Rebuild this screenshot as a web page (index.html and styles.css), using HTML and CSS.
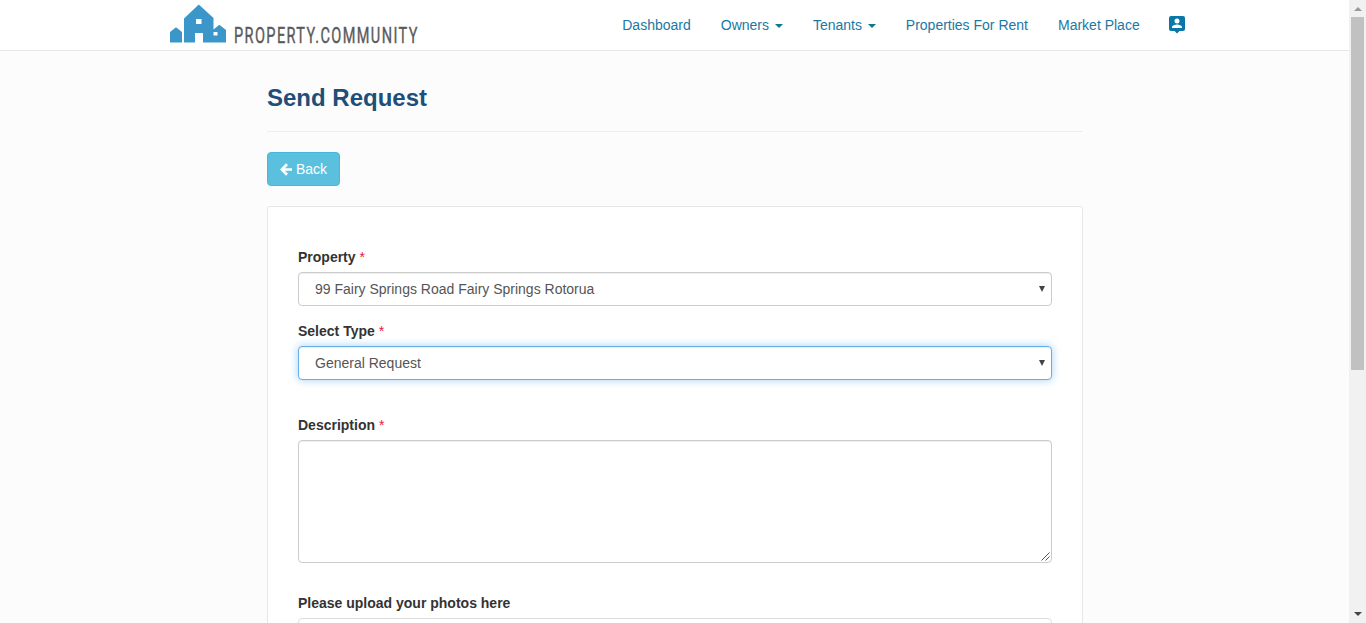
FILE: index.html
```html
<!DOCTYPE html>
<html lang="en">
<head>
<meta charset="utf-8">
<title>Send Request</title>
<link rel="stylesheet" href="styles.css">
</head>
<body>
<div class="page">
  <header class="navbar">
    <a class="brand">
      <svg width="270" height="50" viewBox="0 0 270 50">
        <path class="brand-mark" fill-rule="evenodd" d="M0 42.500V32l6-4.700 6 4.700v10.500zM14 42.500V18.500L28.800 4.500 43.500 18v11.500l5.800-4.800L56 30v12.500H33V33h-8v9.500zM26 19v5h5.500v-5zM43.500 32v3.500h4V32z"/>
        <text class="brand-text" transform="translate(64 42.700) scale(.66 1)" textLength="278" lengthAdjust="spacing">PROPERTY.COMMUNITY</text>
      </svg>
    </a>
    <nav class="menu">
      <a>Dashboard</a>
      <a>Owners <i class="caret"></i></a>
      <a>Tenants <i class="caret"></i></a>
      <a>Properties For Rent</a>
      <a>Market Place</a>
      <a class="account"><svg width="16" height="18" viewBox="0 0 16 18"><path fill="#0b77a8" fill-rule="evenodd" d="M2 0h12q2 0 2 2v11q0 2-2 2h-3.500L8 17.500 5.500 15H2q-2 0-2-2V2q0-2 2-2zM8 2.500a2.500 2.500 0 1 0 0 5 2.500 2.500 0 1 0 0-5zM3 12h10v-.8c0-1.700-3.300-2.600-5-2.600s-5 .9-5 2.600z"/></svg></a>
    </nav>
  </header>
  <main class="content">
    <h1>Send Request</h1>
    <a class="back"><svg width="12" height="13" viewBox="0 0 12 13"><path d="M7 1.200 1.900 6.500 7 11.800M2.500 6.500H12" fill="none" stroke="#fff" stroke-width="2.700"/></svg><span>Back</span></a>
    <form class="panel">
      <label>Property <b>*</b></label>
      <div class="control select"><span>99 Fairy Springs Road Fairy Springs Rotorua</span><i class="arrow"></i></div>
      <label>Select Type <b>*</b></label>
      <div class="control select focused"><span>General Request</span><i class="arrow"></i></div>
      <label class="spaced">Description <b>*</b></label>
      <div class="control area"><svg width="9" height="9" viewBox="0 0 9 9"><path d="M.5 8.500l8-8M4.500 8.500l4-4" stroke="#555"/></svg></div>
      <label class="upload-label">Please upload your photos here</label>
      <div class="control upload"></div>
    </form>
  </main>
</div>
<aside class="scrollbar"><i class="up"></i><div class="thumb"></div><i class="down"></i></aside>
</body>
</html>
```
FILE: styles.css
```css
* { box-sizing: border-box; }
body {
  margin: 0;
  height: 623px;
  display: flex;
  overflow: hidden;
  font: 14px/20px "Liberation Sans", Arial, sans-serif;
  color: #333;
  background: #fcfcfc;
}
.page { width: 1349px; height: 623px; overflow: hidden; }
.navbar {
  height: 51px;
  display: flex;
  justify-content: space-between;
  padding: 0 164px 0 170px;
  background: #fff;
  border-bottom: 1px solid #e7e7e7;
}
.brand svg { display: block; }
.brand-mark { fill: #3b97c9; }
.brand-text { font: 22px Roboto, sans-serif; fill: #5a5a5c; stroke: #5a5a5c; stroke-width: .4px; }
.menu { display: flex; gap: 30px; padding-top: 15px; color: #1a78a5; white-space: nowrap; }
.caret {
  display: inline-block;
  margin-left: 2px;
  vertical-align: middle;
  border-top: 4px solid #0b7794;
  border-left: 4px solid transparent;
  border-right: 4px solid transparent;
}
.account { margin-left: -.7px; }
.account svg { display: block; margin-top: 1px; }
.content { width: 816px; margin-left: 267px; padding-top: 30px; }
h1 {
  margin: 0 0 20px;
  height: 51px;
  border-bottom: 1px solid #eee;
  font-size: 24px;
  line-height: 34px;
  color: #1f4e79;
}
.back {
  display: flex;
  align-items: center;
  gap: 4px;
  width: 73px;
  height: 34px;
  padding-left: 12px;
  border: 1px solid #46b8da;
  border-radius: 4px;
  background: #5bc0de;
  color: #fff;
}
.panel {
  height: 600px;
  margin-top: 20px;
  padding: 40px 30px;
  background: #fff;
  border: 1px solid #e7e7e7;
  border-radius: 3px;
}
label { display: block; height: 20px; margin-bottom: 5px; font-weight: bold; }
label b { font-weight: normal; color: #e5193c; }
.control {
  height: 34px;
  border: 1px solid #ccc;
  border-radius: 4px;
  background: #fff;
  box-shadow: inset 0 1px 1px rgba(0, 0, 0, .075);
  color: #555;
}
.select {
  display: flex;
  align-items: center;
  justify-content: space-between;
  padding: 0 6px 0 16px;
  margin-bottom: 15px;
}
.focused { border-color: #66afe9; box-shadow: inset 0 1px 1px rgba(0, 0, 0, .075), 0 0 8px rgba(102, 175, 233, .6); }
.arrow { border-top: 6px solid #444; border-left: 3.5px solid transparent; border-right: 3.5px solid transparent; }
.spaced { margin-top: 35px; }
.area { height: 123px; display: flex; align-items: flex-end; justify-content: flex-end; padding: 1px; }
.upload-label { margin-top: 30px; }
.upload { border-color: #ddd; box-shadow: none; }
.scrollbar {
  width: 17px;
  height: 623px;
  display: flex;
  flex-direction: column;
  align-items: center;
  background: #f1f1f1;
}
.thumb { width: 13px; height: 353px; background: #c1c1c1; }
.up { margin: 7px 0 6px; border-bottom: 4px solid #999; border-left: 4px solid transparent; border-right: 4px solid transparent; }
.down { margin: auto 0 7px; border-top: 4px solid #444; border-left: 4px solid transparent; border-right: 4px solid transparent; }
```
